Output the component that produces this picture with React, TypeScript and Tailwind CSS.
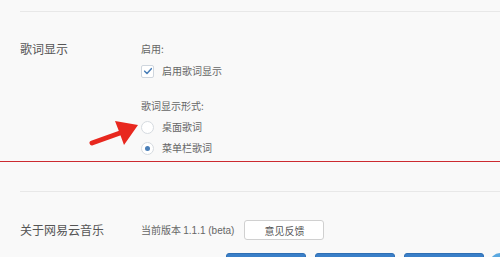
const cjk = "font-['Noto_Sans_CJK_SC','Liberation_Sans',sans-serif]";

function Checkbox({ checked }: { checked: boolean }) {
  return (
    <span className="flex h-[13px] w-[13px] items-center justify-center rounded-[2px] border border-[#cfd6de] bg-white">
      {checked && (
        <svg viewBox="0 0 12 12" className="h-[10px] w-[10px]">
          <path d="M2 6.2 L4.8 9 L10 3.2" fill="none" stroke="#4a7fb8" strokeWidth="1.8" strokeLinecap="round" strokeLinejoin="round" />
        </svg>
      )}
    </span>
  );
}

function Radio({ checked }: { checked: boolean }) {
  return (
    <span className="flex h-[13px] w-[13px] items-center justify-center rounded-full border border-[#d6dbe0] bg-white">
      {checked && <span className="h-[5px] w-[5px] rounded-full bg-[#4a7fb8]" />}
    </span>
  );
}

export default function App() {
  return (
    <div className={`relative h-[257px] w-[500px] overflow-hidden bg-[#f9f9f9] ${cjk}`}>
      <div className="pt-[11px]">
        <div className="ml-[20px] h-px bg-[#e8e8e8]" />
      </div>

      {/* 歌词显示 */}
      <div className="flex pt-[29px]">
        <div className="w-[141px] shrink-0 pl-[20px] text-[12px] leading-[16px] text-[#555]">歌词显示</div>
        <div className="flex flex-col text-[10px] leading-[16px] text-[#666]">
          <div>启用:</div>
          <label className="mt-[6px] flex items-center gap-[8px]">
            <Checkbox checked />
            <span>启用歌词显示</span>
          </label>
          <div className="mt-[19px]">歌词显示形式:</div>
          <label className="mt-[5px] flex items-center gap-[8px]">
            <Radio checked={false} />
            <span>桌面歌词</span>
          </label>
          <label className="mt-[5px] flex items-center gap-[8px]">
            <Radio checked />
            <span>菜单栏歌词</span>
          </label>
        </div>
      </div>

      <div className="mt-[5px] h-px bg-[#cc2a30]" />

      <div className="pt-[29px]">
        <div className="ml-[20px] h-px bg-[#e8e8e8]" />
      </div>

      {/* 关于 */}
      <div className="flex items-center pt-[28px]">
        <div className="w-[141px] shrink-0 pl-[20px] text-[12px] leading-[16px] text-[#555]">关于网易云音乐</div>
        <div className="flex items-center text-[10px] text-[#666]">
          <span>
            当前版本 <span className="font-['Liberation_Sans',sans-serif] text-[10px]">1.1.1 (beta)</span>
          </span>
          <button className="ml-[10px] h-[20px] w-[80px] rounded-[3px] border border-[#d0d0d0] bg-white text-[10px] text-[#555]">
            意见反馈
          </button>
        </div>
      </div>

      <div className="mt-[13px] flex items-start">
        <div className="w-[226px] shrink-0" />
        <div className="flex shrink-0 gap-[9px]">
          <div className="h-[20px] w-[80px] shrink-0 rounded-[3px] border border-[#2f6fb4] bg-[#3a7fc8]" />
          <div className="h-[20px] w-[80px] shrink-0 rounded-[3px] border border-[#2f6fb4] bg-[#3a7fc8]" />
          <div className="h-[20px] w-[80px] shrink-0 rounded-[3px] border border-[#2f6fb4] bg-[#3a7fc8]" />
          <div className="-ml-[3px] h-[20px] w-[20px] shrink-0 rounded-full bg-[#5aa8e0]" />
        </div>
      </div>

      {/* red arrow */}
      <svg className="absolute left-[88px] top-[116px]" width="54" height="34" viewBox="0 0 54 34">
        <path d="M4 27 L32 17" stroke="#e8281f" strokeWidth="5" strokeLinecap="round" />
        <path d="M27 5 L50 9 L36 29 L32 18 Z" fill="#e8281f" />
      </svg>
    </div>
  );
}
